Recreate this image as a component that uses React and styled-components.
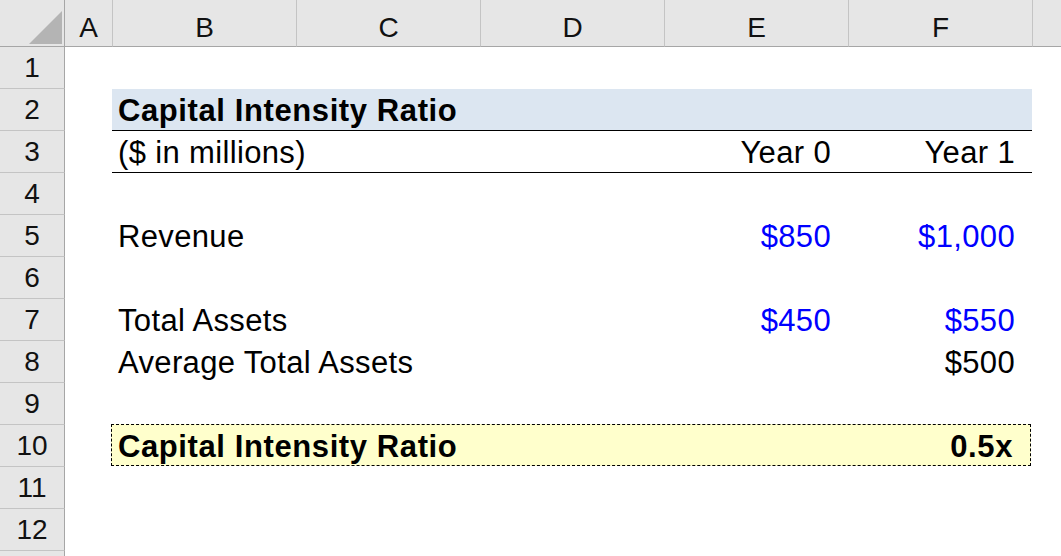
import React from "react";
import styled, { createGlobalStyle } from "styled-components";

const GlobalStyle = createGlobalStyle`
  html, body {
    margin: 0;
    padding: 0;
    background: #ffffff;
    overflow: hidden;
  }
  body {
    font-family: "Liberation Sans", Arial, sans-serif;
    color: #000000;
  }
`;

const Sheet = styled.div`
  display: grid;
  grid-template-columns: 65px 47px repeat(5, 184px) 1fr;
  grid-template-rows: 47px repeat(13, 42px);
  width: 1061px;
  height: 556px;
  overflow: hidden;
`;

const Corner = styled.div`
  position: relative;
  background: #e6e6e6;
  border-right: 1px solid #a6a6a6;
  border-bottom: 1px solid #a6a6a6;
  box-sizing: border-box;

  svg {
    position: absolute;
    right: 2px;
    bottom: 2px;
  }
`;

const ColHeader = styled.div`
  background: #e6e6e6;
  border-bottom: 1px solid #a6a6a6;
  border-left: ${(p) => (p.$first ? "none" : "1px solid #c4c4c4")};
  box-sizing: border-box;
  font-size: 28px;
  line-height: 36px;
  padding-top: 10px;
  text-align: center;
  color: #111;
`;

const RowHeader = styled.div`
  background: #e6e6e6;
  border-right: 1px solid #a6a6a6;
  border-bottom: 1px solid #c4c4c4;
  box-sizing: border-box;
  font-size: 28px;
  line-height: 42px;
  text-align: center;
  color: #111;
`;

const Blank = styled.div``;

const isBold = (v) => v === "title" || v === "result";

const Band = styled.div`
  grid-column: 3 / 8;
  display: grid;
  grid-template-columns: repeat(5, 1fr);
  box-sizing: border-box;
  font-size: 31px;
  line-height: 40px;
  padding-top: 2px;
  background: ${(p) =>
    p.$variant === "title" ? "#dce6f1" : p.$variant === "result" ? "#ffffcc" : "transparent"};
  border-bottom: ${(p) =>
    p.$variant === "title" || p.$variant === "units" ? "1px solid #000" : "none"};
  ${(p) =>
    p.$variant === "result" &&
    `
    border: 1px dashed #000;
    margin: -1px 1px 1px -1px;
  `}
  font-weight: ${(p) => (isBold(p.$variant) ? 700 : 400)};
  letter-spacing: ${(p) => (isBold(p.$variant) ? "0.6px" : "0.35px")};
`;

const Label = styled.div`
  grid-column: 1 / 4;
  padding-left: 6px;
  white-space: nowrap;
`;

const Value = styled.div`
  grid-column: ${(p) => p.$col};
  text-align: right;
  padding-right: 17px;
  white-space: nowrap;
  color: ${(p) => (p.$input ? "#0000ff" : "#000")};
`;

const columns = ["A", "B", "C", "D", "E", "F", ""];

const rows = [
  { n: 1 },
  { n: 2, variant: "title", label: "Capital Intensity Ratio" },
  { n: 3, variant: "units", label: "($ in millions)", e: "Year 0", f: "Year 1" },
  { n: 4 },
  { n: 5, label: "Revenue", e: "$850", f: "$1,000", input: true },
  { n: 6 },
  { n: 7, label: "Total Assets", e: "$450", f: "$550", input: true },
  { n: 8, label: "Average Total Assets", f: "$500" },
  { n: 9 },
  { n: 10, variant: "result", label: "Capital Intensity Ratio", f: "0.5x" },
  { n: 11 },
  { n: 12 },
  { n: 13, hidden: true },
];

const SheetRow = ({ n, hidden, variant, label, e, f, input }) => (
  <>
    <RowHeader>{hidden ? "" : n}</RowHeader>
    <Blank />
    {label || e || f ? (
      <Band $variant={variant}>
        <Label>{label}</Label>
        {e && (
          <Value $col={4} $input={input}>
            {e}
          </Value>
        )}
        {f && (
          <Value $col={5} $input={input}>
            {f}
          </Value>
        )}
      </Band>
    ) : (
      <Band />
    )}
    <Blank />
  </>
);

export default function App() {
  return (
    <>
      <GlobalStyle />
      <Sheet>
        <Corner>
          <svg width="33" height="33" viewBox="0 0 33 33">
            <polygon points="33,0 33,33 0,33" fill="#b4b4b4" />
          </svg>
        </Corner>
        {columns.map((c, i) => (
          <ColHeader key={i} $first={i === 0}>
            {c}
          </ColHeader>
        ))}
        {rows.map((r) => (
          <SheetRow key={r.n} {...r} />
        ))}
      </Sheet>
    </>
  );
}
